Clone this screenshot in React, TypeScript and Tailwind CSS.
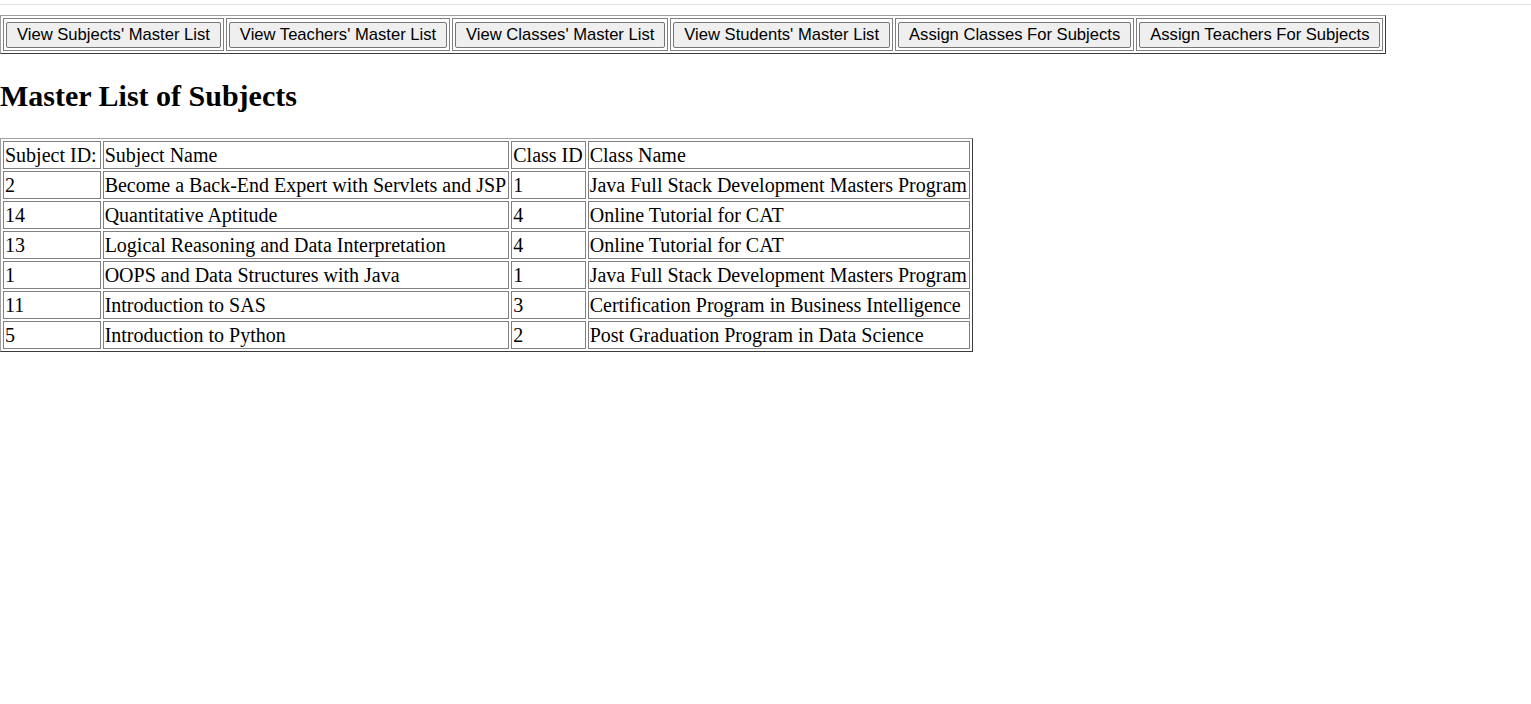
const navButtons = [
  "View Subjects' Master List",
  "View Teachers' Master List",
  "View Classes' Master List",
  "View Students' Master List",
  'Assign Classes For Subjects',
  'Assign Teachers For Subjects',
];

const subjects = [
  { id: '2', name: 'Become a Back-End Expert with Servlets and JSP', classId: '1', className: 'Java Full Stack Development Masters Program' },
  { id: '14', name: 'Quantitative Aptitude', classId: '4', className: 'Online Tutorial for CAT' },
  { id: '13', name: 'Logical Reasoning and Data Interpretation', classId: '4', className: 'Online Tutorial for CAT' },
  { id: '1', name: 'OOPS and Data Structures with Java', classId: '1', className: 'Java Full Stack Development Masters Program' },
  { id: '11', name: 'Introduction to SAS', classId: '3', className: 'Certification Program in Business Intelligence' },
  { id: '5', name: 'Introduction to Python', classId: '2', className: 'Post Graduation Program in Data Science' },
];

const outerTable =
  'border-separate border-spacing-[2px] border border-t-[#a0a0a0] border-l-[#a0a0a0] border-b-[#3c3c3c] border-r-[#3c3c3c]';
const cell = 'border border-[#808080] pl-[1px] pr-[2px] py-[1px] text-left font-normal align-middle leading-[24px] whitespace-nowrap';

export default function App() {
  return (
    <div className="min-h-screen bg-white text-black font-['Liberation_Serif','Times_New_Roman',serif]">
      <div className="pt-[4px]">
        <div className="h-px bg-[#e3e3e3]" />
      </div>

      {/* nav buttons */}
      <table className={`mt-[10px] ${outerTable}`}>
        <tbody>
          <tr>
            {navButtons.map((label) => (
              <td key={label} className="border border-[#808080] pt-[3px] pb-[2px] px-[2px] align-top">
                <button className="block h-[26px] px-[10px] bg-[#efefef] border border-[#767676] rounded-[2px] text-[16.6px] leading-[20px] text-black font-['Liberation_Sans',Arial,sans-serif] whitespace-nowrap">
                  {label}
                </button>
              </td>
            ))}
          </tr>
        </tbody>
      </table>

      <h2 className="mt-[25px] mb-[25px] text-[30px] leading-[34px] font-bold">Master List of Subjects</h2>

      <table className={`text-[20px] ${outerTable}`}>
        <thead>
          <tr>
            <th className={`${cell} pr-[3px]`}>Subject ID:</th>
            <th className={cell}>Subject Name</th>
            <th className={cell}>Class ID</th>
            <th className={cell}>Class Name</th>
          </tr>
        </thead>
        <tbody>
          {subjects.map((s) => (
            <tr key={s.id}>
              <td className={cell}>{s.id}</td>
              <td className={cell}>{s.name}</td>
              <td className={cell}>{s.classId}</td>
              <td className={cell}>{s.className}</td>
            </tr>
          ))}
        </tbody>
      </table>
    </div>
  );
}
